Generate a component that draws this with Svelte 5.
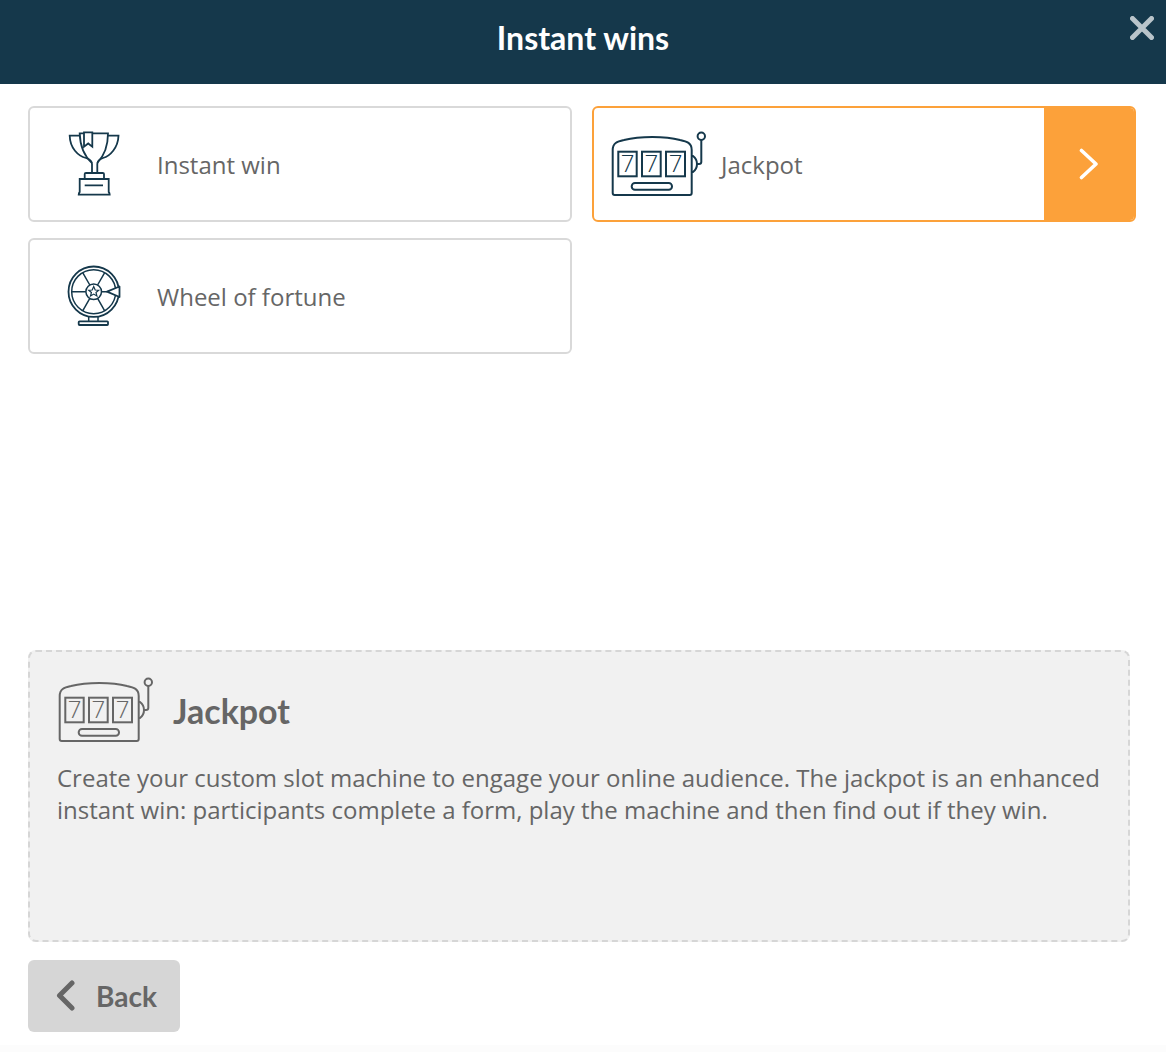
<script lang="ts">
	const games = [
		{ id: 'instant', label: 'Instant win' },
		{ id: 'jackpot', label: 'Jackpot', active: true },
		{ id: 'wheel', label: 'Wheel of fortune' }
	];
</script>

{#snippet slotIcon()}
	<svg class="slot" viewBox="0 0 96 68" fill="none" stroke="currentColor">
		<path d="M2.7 20C2.7 13 7 11.5 14 10C30 6 55 6 70 10C77 11.5 81.7 13 81.7 20V63Q81.7 65 79.7 65H4.7Q2.7 65 2.7 63Z" />
		<rect x="8.3" y="21.7" width="18.4" height="24.6" />
		<rect x="32" y="21.7" width="18.7" height="24.6" />
		<rect x="56" y="21.7" width="19" height="24.6" />
		<text x="17.5" y="42" text-anchor="middle">7</text>
		<text x="41.3" y="42" text-anchor="middle">7</text>
		<text x="65.5" y="42" text-anchor="middle">7</text>
		<rect x="21.7" y="53" width="40.3" height="6.7" rx="3.3" />
		<circle cx="91.3" cy="6.3" r="3.7" />
		<path d="M91.3 10V32Q91.3 34 89 34H87" />
		<path d="M81.7 26H83Q87 29 87 34Q87 39 83 42H81.7" />
	</svg>
{/snippet}

{#snippet trophyIcon()}
	<svg class="icon" viewBox="0 0 60 72" fill="none" stroke="currentColor" stroke-width="1.8">
		<path d="M15.7 7.7H5.7C6 20 14 28 22 30C25 31 28 33 28 36V45" />
		<path d="M44 7.7H54.5C54 20 46 28 39 30C36 31 33.3 33 33.3 36V45" />
		<path d="M20 5.3H15.7C16 16 19 27 28 35" />
		<path d="M28.3 5.3H44C44 16 41 27 33.3 35" />
		<path d="M20 4.3H28.3V18.7L24.2 15.5L20 18.7Z" />
		<path d="M20.7 50V46Q20.7 45 22 45H38.7Q40 45 40 46V50" />
		<path d="M15.7 51H44.7V64Q45.7 65 45.7 66.7H14.7Q14.7 65 15.7 64Z" />
		<path d="M20.7 57.3H39" />
	</svg>
{/snippet}

{#snippet wheelIcon()}
	<svg class="icon" viewBox="0 0 60 72" fill="none" stroke="currentColor" stroke-width="1.5">
		<circle cx="29.7" cy="31.7" r="25.2" stroke-width="1.8" />
		<circle cx="29.7" cy="31.7" r="22" />
		<circle cx="29.7" cy="31.7" r="7.8" />
		<path d="M29.7 26.6L31.2 30L34.7 30.2L32 32.5L32.9 36L29.7 34.1L26.5 36L27.4 32.5L24.7 30.2L28.2 30Z" stroke-width="1.2" />
		<path d="M7.7 31.7H21.9M25.8 25L18.7 12.6M33.6 25L40.7 12.6M25.8 38.4L18.7 50.8M33.6 38.4L40.7 50.8M37.5 31.7H43" />
		<path d="M43 31.7L55.5 26.5V37Z" fill="#fff" stroke-width="1.8" stroke-linejoin="round" />
		<path d="M24.7 57V61.3M34 57V61.3" />
		<rect x="14.7" y="61.3" width="29.3" height="3.7" rx="0.8" stroke-width="1.8" />
	</svg>
{/snippet}

<div class="page">
	<header class="topbar">
		<h1>Instant wins</h1>
		<button class="close" aria-label="Close">
			<svg viewBox="0 0 24 24" stroke="currentColor" stroke-width="5" stroke-linecap="round">
				<path d="M2.5 2.5L21.5 21.5M21.5 2.5L2.5 21.5" />
			</svg>
		</button>
	</header>

	<main>
		<section class="cards">
			{#each games as game}
				<div class="card" class:active={game.active}>
					<div class="card-icon">
						{#if game.id === 'instant'}
							{@render trophyIcon()}
						{:else if game.id === 'jackpot'}
							{@render slotIcon()}
						{:else}
							{@render wheelIcon()}
						{/if}
					</div>
					<span class="card-label">{game.label}</span>
					{#if game.active}
						<div class="card-arrow">
							<svg viewBox="0 0 20 32" fill="none" stroke="#fff" stroke-width="3.6" stroke-linecap="round" stroke-linejoin="round">
								<path d="M2.5 2.5L17 16L2.5 29.5" />
							</svg>
						</div>
					{/if}
				</div>
			{/each}
		</section>

		<section class="details">
			<div class="details-head">
				{@render slotIcon()}
				<h2>Jackpot</h2>
			</div>
			<p>
				Create your custom slot machine to engage your online audience. The jackpot is an enhanced
				instant win: participants complete a form, play the machine and then find out if they win.
			</p>
		</section>

		<button class="back">
			<svg viewBox="0 0 20 32" fill="none" stroke="currentColor" stroke-width="5" stroke-linecap="round" stroke-linejoin="round">
				<path d="M16 3L3.5 15.5L16 28" />
			</svg>
			<span>Back</span>
		</button>
	</main>
	<div class="page-foot"></div>
</div>

<style>
	:global(body) {
		background: #fff;
	}

	.page {
		width: 1166px;
		height: 1052px;
		overflow: hidden;
		font-family: 'Open Sans', sans-serif;
		color: #666;
	}

	.topbar {
		position: relative;
		height: 84px;
		background: #15384b;
		display: flex;
		align-items: center;
		justify-content: center;
	}

	h1 {
		margin: 0 0 10px;
		font-family: Lato, sans-serif;
		font-size: 32px;
		font-weight: 700;
		color: #fff;
	}

	.close {
		position: absolute;
		top: 16px;
		right: 11px;
		width: 26px;
		height: 24px;
		padding: 0 1px;
		border: 0;
		background: none;
		color: #b9c4ca;
	}

	.close svg {
		display: block;
		width: 24px;
		height: 24px;
	}

	main {
		padding: 22px 30px 0 28px;
	}

	.cards {
		display: grid;
		grid-template-columns: 544px 544px;
		grid-auto-rows: 116px;
		gap: 16px 20px;
		height: 544px;
		align-content: start;
	}

	.card {
		display: flex;
		align-items: center;
		border: 2px solid #d9d9d9;
		border-radius: 6px;
		background: #fff;
		overflow: hidden;
	}

	.card.active {
		border-color: #fca13a;
	}

	.card-icon {
		display: flex;
		justify-content: center;
		flex: 0 0 127px;
		width: 127px;
		padding-right: 0;
		color: #15384b;
	}

	.card-label {
		flex: 1;
		font-size: 24px;
	}

	.card-arrow {
		display: flex;
		align-items: center;
		justify-content: center;
		align-self: stretch;
		width: 90px;
		background: #fca13a;
	}

	.card-arrow svg {
		width: 20px;
		height: 32px;
	}

	.icon {
		display: block;
		width: 60px;
		height: 72px;
	}

	.slot {
		display: block;
		flex: none;
		width: 96px;
		height: 68px;
		stroke-width: 2;
	}

	.slot text {
		font-family: 'Open Sans', sans-serif;
		font-size: 24px;
		font-weight: 300;
		fill: currentColor;
		stroke: none;
	}

	.details {
		box-sizing: border-box;
		width: 1102px;
		height: 292px;
		padding: 24px 27px 0;
		background: #f1f1f1;
		border: 2px dashed #d6d6d6;
		border-radius: 8px;
	}

	.details-head {
		display: flex;
		align-items: center;
		gap: 20px;
		height: 68px;
	}

	h2 {
		margin: 0;
		font-family: Lato, sans-serif;
		font-size: 34px;
		font-weight: 700;
		color: #666;
	}

	.details p {
		margin: 18px 0 0;
		font-size: 24px;
		line-height: 32px;
		white-space: pre-line;
	}

	.back {
		display: flex;
		align-items: center;
		gap: 20px;
		width: 152px;
		height: 72px;
		margin-top: 18px;
		padding: 0 0 0 28px;
		border: 0;
		border-radius: 6px;
		background: #d6d6d6;
		color: #666;
		font-family: Lato, sans-serif;
		font-size: 28px;
		font-weight: 700;
	}

	.back svg {
		width: 20px;
		height: 32px;
	}

	.page-foot {
		height: 8px;
		margin-top: 13px;
		background: #fcfcfc;
	}
</style>
